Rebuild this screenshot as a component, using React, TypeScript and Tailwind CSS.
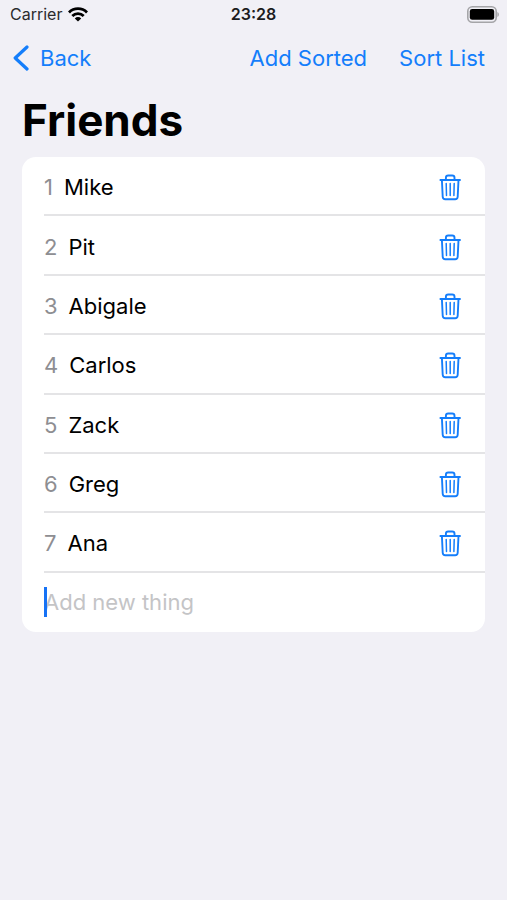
import { FormEvent, useState } from "react";

const initialFriends = ["Mike", "Pit", "Abigale", "Carlos", "Zack", "Greg", "Ana"];

function WifiIcon() {
  return (
    <svg viewBox="0 0 20 15" className="h-[15px] w-5" aria-hidden="true">
      <g fill="none" stroke="#000" strokeWidth="2.8">
        <path d="M1 5.4a12.8 12.8 0 0 1 18 0" />
        <path d="M4.3 8.9a8.1 8.1 0 0 1 11.4 0" />
      </g>
      <path d="M10 14.6 6.8 11.4a4.6 4.6 0 0 1 6.4 0Z" />
    </svg>
  );
}

function BatteryIcon() {
  return (
    <svg viewBox="0 0 32 17" className="h-[17px] w-8" aria-hidden="true">
      <rect
        x="0.8"
        y="0.8"
        width="28.4"
        height="15.4"
        rx="4.5"
        fill="none"
        stroke="#a5a5a8"
        strokeWidth="1.6"
      />
      <rect x="2.8" y="3" width="24.4" height="10.8" rx="2.4" />
      <path d="M30.4 6v5c2-.8 2-4.2 0-5Z" fill="#a5a5a8" />
    </svg>
  );
}

function ChevronIcon() {
  return (
    <svg viewBox="0 0 16 26" className="h-[26px] w-4" aria-hidden="true">
      <path
        d="M14 2 2.2 13 14 24"
        fill="none"
        stroke="currentColor"
        strokeWidth="3.2"
        strokeLinecap="round"
        strokeLinejoin="round"
      />
    </svg>
  );
}

function TrashIcon() {
  return (
    <svg
      viewBox="0 0 22 27"
      className="h-[27px] w-[22px]"
      fill="none"
      stroke="currentColor"
      strokeWidth="1.9"
      strokeLinecap="round"
      strokeLinejoin="round"
      aria-hidden="true"
    >
      <path d="M1.4 6h19.6" />
      <path d="M6.9 6V3.8c0-1.5.8-2.3 2.3-2.3h4c1.5 0 2.3.8 2.3 2.3V6" />
      <path d="m2.9 6 .8 16.7c.1 1.6 1 2.5 2.6 2.5h9.8c1.6 0 2.5-.9 2.6-2.5L19.5 6" />
      <path d="m7.2 9.6.3 12M11.2 9.6v12M15.2 9.6l-.3 12" strokeWidth="1.5" />
    </svg>
  );
}

export default function App() {
  const [friends, setFriends] = useState(initialFriends);
  const [draft, setDraft] = useState("");

  function handleSubmit(event: FormEvent<HTMLFormElement>) {
    event.preventDefault();
    if (!draft.trim()) return;
    setFriends([...friends, draft.trim()]);
    setDraft("");
  }

  function addSorted() {
    if (!draft.trim()) return;
    setFriends([...friends, draft.trim()].sort());
    setDraft("");
  }

  return (
    <div className="min-h-screen bg-[#f1f0f6] font-[Inter,'Liberation_Sans',sans-serif] text-black">
      <header>
        <div className="grid h-7 grid-cols-3 items-center px-2">
          <div className="flex items-center gap-[6px] pl-[2px] text-base text-[#2b2b2d]">
            Carrier
            <WifiIcon />
          </div>
          <time className="text-center text-base font-semibold text-[#1c1c1e]">23:28</time>
          <div className="flex justify-end">
            <BatteryIcon />
          </div>
        </div>

        <nav className="flex h-[60px] items-center justify-between pl-[13px] pr-[22px] text-[22px] text-[#147efb]">
          <button type="button" className="flex items-center gap-[11px]">
            <ChevronIcon />
            Back
          </button>
          <div className="flex gap-8">
            <button type="button" onClick={addSorted}>
              Add Sorted
            </button>
            <button type="button" onClick={() => setFriends([...friends].sort())}>
              Sort List
            </button>
          </div>
        </nav>
      </header>

      <main className="px-[22px] pb-8">
        <h1 className="pb-[5px] text-[44px] font-bold leading-[64px]">Friends</h1>

        <ul className="grid min-h-[475px] auto-rows-fr overflow-hidden rounded-[14px] bg-white pl-[22px] text-[22px]">
          {friends.map((name, index) => (
            <li
              key={`${name}-${index}`}
              className="flex items-center border-b-2 border-[#e4e4e6] pr-6 pt-1"
            >
              <span className="text-[#8e8e92]">{index + 1}</span>
              <span className="grow pl-[11px]">{name}</span>
              <button
                type="button"
                aria-label={`Delete ${name}`}
                className="text-[#147efb]"
                onClick={() => setFriends(friends.filter((_, i) => i !== index))}
              >
                <TrashIcon />
              </button>
            </li>
          ))}
          <li className="flex items-center pr-6">
            <form onSubmit={handleSubmit} className="relative w-full">
              <input
                type="text"
                value={draft}
                onChange={(event) => setDraft(event.target.value)}
                placeholder="Add new thing"
                aria-label="Add new thing"
                className="block w-full caret-[#147efb] outline-none placeholder:text-[#c4c4c6]"
              />
              {draft === "" ? (
                <span className="pointer-events-none absolute inset-y-0 left-0 my-auto h-[30px] w-[3px] bg-[#1672f5]" />
              ) : null}
            </form>
          </li>
        </ul>
      </main>
    </div>
  );
}
